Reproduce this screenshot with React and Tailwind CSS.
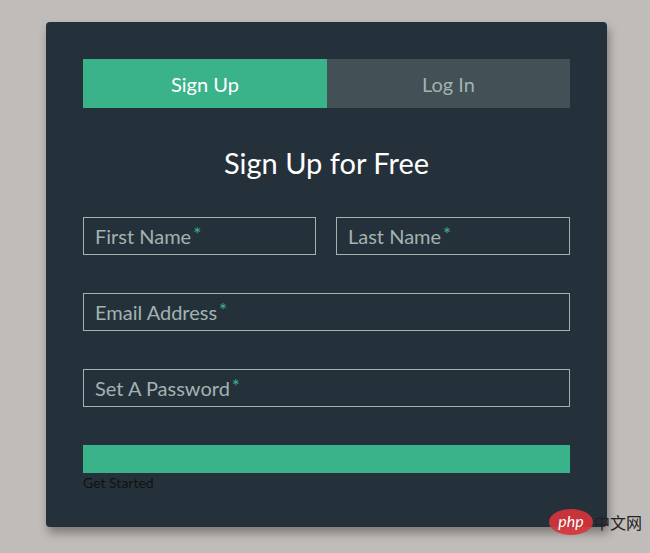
import React from "react";

function Field({ label, className = "" }) {
  return (
    <div
      className={`h-[38px] border border-[#a0b3b0] flex items-center px-[11px] text-[20px] text-[#a0b3b0] ${className}`}
    >
      {label}
      <span className="text-[#3db28a] ml-[2px] -mt-[4px] text-[19px]">*</span>
    </div>
  );
}

export default function App() {
  return (
    <div
      className="relative w-[650px] h-[553px] bg-[#c0bcb9] pt-[22px] pl-[46px]"
      style={{ fontFamily: "Lato, 'Open Sans', sans-serif" }}
    >
      <div className="w-[561px] h-[505px] bg-[#25313a] rounded-[4px] shadow-[2px_6px_10px_rgba(0,0,0,0.35)] px-[37px] pt-[37px]">
        {/* Tabs */}
        <div className="flex h-[49px]">
          <div className="w-[244px] bg-[#3ab28a] text-white flex items-center justify-center text-[20px]">
            Sign Up
          </div>
          <div className="flex-1 bg-[#435056] text-[#a0b3b0] flex items-center justify-center text-[20px]">
            Log In
          </div>
        </div>

        <h1 className="text-white text-[29px] text-center mt-[36px] leading-[38px]">
          Sign Up for Free
        </h1>

        <div className="flex gap-[20px] mt-[35px]">
          <Field label="First Name" className="w-[233px]" />
          <Field label="Last Name" className="flex-1" />
        </div>
        <Field label="Email Address" className="mt-[38px]" />
        <Field label="Set A Password" className="mt-[38px]" />

        <div className="mt-[38px] h-[28px] bg-[#3ab28a]" />
        <div className="text-[14px] text-[#111] leading-[18px] mt-[1px]">Get Started</div>
      </div>

      {/* watermark */}
      <div className="absolute left-[549px] top-[509px] flex items-center">
        <div className="w-[44px] h-[26px] rounded-[50%] bg-[#d8353a]/90 flex items-center justify-center text-white italic text-[16px] leading-none pb-[3px]">
          php
        </div>
        <span
          className="text-[16px] text-[#222] ml-[1px]"
          style={{ fontFamily: "'Noto Sans CJK SC', sans-serif" }}
        >
          中文网
        </span>
      </div>
    </div>
  );
}
